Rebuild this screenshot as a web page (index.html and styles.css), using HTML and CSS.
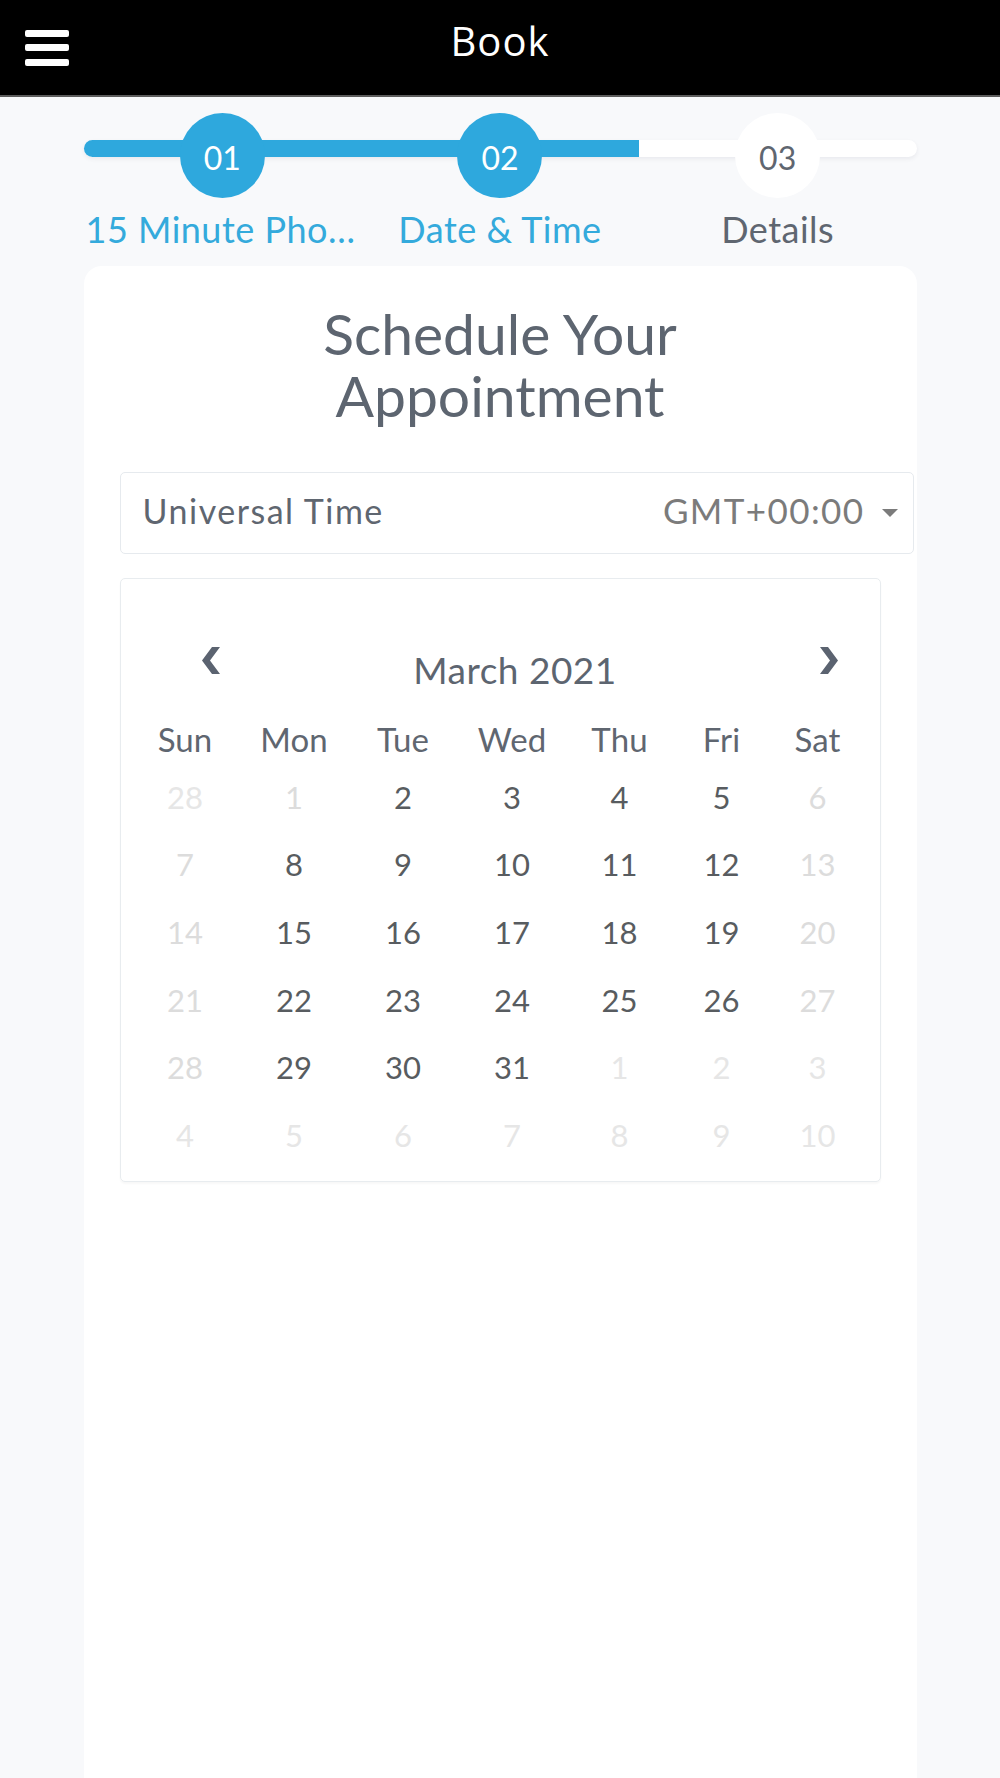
FILE: index.html
```html
<!DOCTYPE html>
<html>
	<head>
		<meta charset="UTF-8">
		<title>Book</title>
		<link rel="stylesheet" href="styles.css">
	</head>
	<body>
		<header class="topbar">
			<div class="menu"><span></span><span></span><span></span></div>
			<div class="topbar-title">Book</div>
			<div></div>
		</header>
		<main class="page">
			<div class="steps">
				<div class="steps-track"><div class="steps-fill"></div></div>
				<div class="step done">
					<div class="step-num">01</div>
					<div class="step-label">15 Minute Phone Consultation</div>
				</div>
				<div class="step done">
					<div class="step-num">02</div>
					<div class="step-label">Date &amp; Time</div>
				</div>
				<div class="step">
					<div class="step-num">03</div>
					<div class="step-label">Details</div>
				</div>
			</div>
			<section class="card">
				<h1 class="card-title">Schedule Your<br>Appointment</h1>
				<div class="tz-select">
					<span class="tz-name">Universal Time</span>
					<span class="tz-offset">GMT+00:00</span>
					<span class="caret"></span>
				</div>
				<div class="calendar">
					<div class="cal-head">
						<button class="cal-nav"><svg width="18" height="27" viewBox="0 0 18 27"><polygon points="10,0 18,0 8,13.5 18,27 10,27 0,13.5" fill="#5b6370"/></svg></button>
						<div class="cal-month">March 2021</div>
						<button class="cal-nav"><svg width="18" height="27" viewBox="0 0 18 27"><polygon points="8,0 0,0 10,13.5 0,27 8,27 18,13.5" fill="#5b6370"/></svg></button>
					</div>
					<table class="cal-grid">
						<colgroup><col><col><col><col><col><col><col></colgroup>
						<tr><th>Sun</th><th>Mon</th><th>Tue</th><th>Wed</th><th>Thu</th><th>Fri</th><th>Sat</th></tr>
						<tr><td class="other">28</td><td class="off">1</td><td>2</td><td>3</td><td>4</td><td>5</td><td class="off">6</td></tr>
						<tr><td class="off">7</td><td>8</td><td>9</td><td>10</td><td>11</td><td>12</td><td class="off">13</td></tr>
						<tr><td class="off">14</td><td>15</td><td>16</td><td>17</td><td>18</td><td>19</td><td class="off">20</td></tr>
						<tr><td class="off">21</td><td>22</td><td>23</td><td>24</td><td>25</td><td>26</td><td class="off">27</td></tr>
						<tr><td class="off">28</td><td>29</td><td>30</td><td>31</td><td class="other">1</td><td class="other">2</td><td class="other">3</td></tr>
						<tr><td class="other">4</td><td class="other">5</td><td class="other">6</td><td class="other">7</td><td class="other">8</td><td class="other">9</td><td class="other">10</td></tr>
					</table>
				</div>
			</section>
		</main>
	</body>
</html>
```

FILE: styles.css
```css
*{
	margin: 0;
	padding: 0;
	box-sizing: border-box;
}
body{
	background: #f8f9fb;
	font-family: Lato, "Liberation Sans", sans-serif;
	overflow: hidden;
}
.topbar{
	height: 97px;
	background: #000;
	border-bottom: 2px solid #5c5c5c;
	display: grid;
	grid-template-columns: 1fr auto 1fr;
	align-items: center;
	padding: 0 25px;
}
.menu{
	display: flex;
	flex-direction: column;
	gap: 7.5px;
	width: 44px;
}
.menu span{
	display: block;
	height: 7px;
	background: #fff;
	border-radius: 2px;
}
.topbar-title{
	color: #fff;
	font-family: "Open Sans", "DejaVu Sans", sans-serif;
	font-size: 40px;
	line-height: 53px;
	letter-spacing: 1px;
	margin-bottom: 14px;
}
.page{
	width: 833px;
	margin: 0 auto;
}
.steps{
	position: relative;
	display: grid;
	grid-template-columns: repeat(3, 1fr);
	margin-top: 16px;
}
.steps-track{
	position: absolute;
	top: 27px;
	left: 0;
	right: 0;
	height: 17px;
	background: #fff;
	border-radius: 9px;
	box-shadow: 0 2px 4px rgba(60, 70, 90, 0.08);
}
.steps-fill{
	width: 66.7%;
	height: 100%;
	background: #2ea8dd;
	border-radius: 9px 0 0 9px;
}
.step{
	position: relative;
	min-width: 0;
	text-align: center;
}
.step-num{
	width: 85px;
	height: 85px;
	margin: 0 auto;
	border-radius: 50%;
	background: #fff;
	color: #5f6670;
	font-size: 32px;
	display: flex;
	align-items: center;
	justify-content: center;
	padding-top: 4px;
}
.step.done .step-num{
	background: #2ea8dd;
	color: #fff;
}
.step-label{
	margin-top: 9px;
	padding: 0 2px;
	font-size: 36px;
	letter-spacing: 0.5px;
	line-height: 44px;
	color: #5f6670;
	white-space: nowrap;
	overflow: hidden;
	text-overflow: ellipsis;
}
.step.done .step-label{
	color: #34aadc;
}
.card{
	margin-top: 15px;
	background: #fff;
	border-radius: 18px 18px 0 0;
	padding: 36px 36px 0;
	min-height: 1512px;
}
.card-title{
	font-size: 57px;
	line-height: 62px;
	font-weight: 400;
	color: #5d6570;
	text-align: center;
}
.tz-select{
	margin-top: 46px;
	margin-right: -33px;
	height: 82px;
	border: 1px solid #e6eaee;
	border-radius: 5px;
	display: flex;
	align-items: center;
	padding: 0 15px 6px 22px;
}
.tz-name{
	flex: 1;
	font-size: 34px;
	letter-spacing: 1.5px;
	color: #5f6670;
}
.tz-offset{
	font-size: 35px;
	letter-spacing: 1.4px;
	color: #7b7b7b;
}
.caret{
	width: 0;
	height: 0;
	margin: 6px 0 0 17px;
	border-left: 8px solid transparent;
	border-right: 8px solid transparent;
	border-top: 8px solid #7b7b7b;
}
.calendar{
	margin-top: 24px;
	border: 1px solid #e8ecef;
	border-radius: 5px;
	box-shadow: 0 2px 2px rgba(0, 0, 0, 0.03);
	padding: 61px 0 12px;
}
.cal-head{
	display: grid;
	grid-template-columns: 80px 1fr 80px;
	align-items: center;
	height: 60px;
	padding: 0 11px 0 50px;
	margin-bottom: 15px;
}
.cal-nav{
	background: none;
	border: none;
	display: flex;
	justify-content: center;
	margin-top: -20px;
}
.cal-month{
	font-size: 37px;
	letter-spacing: 0.5px;
	line-height: 60px;
	color: #5d6570;
	text-align: center;
	padding-right: 9px;
}
.cal-grid{
	width: 734px;
	margin-left: 10px;
	border-collapse: collapse;
	table-layout: fixed;
}
.cal-grid col{
	width: 109px;
}
.cal-grid col:nth-child(5){
	width: 106px;
}
.cal-grid col:nth-child(6){
	width: 98px;
}
.cal-grid col:nth-child(7){
	width: 94px;
}
.cal-grid th{
	height: 48px;
	font-size: 33px;
	letter-spacing: 0.1px;
	font-weight: 400;
	color: #5f6670;
}
.cal-grid td{
	height: 67.6px;
	text-align: center;
	font-size: 31px;
	color: #585c60;
}
.cal-grid td.off{
	color: #dcdcdc;
}
.cal-grid td.other{
	color: #e6e6e6;
}
```
